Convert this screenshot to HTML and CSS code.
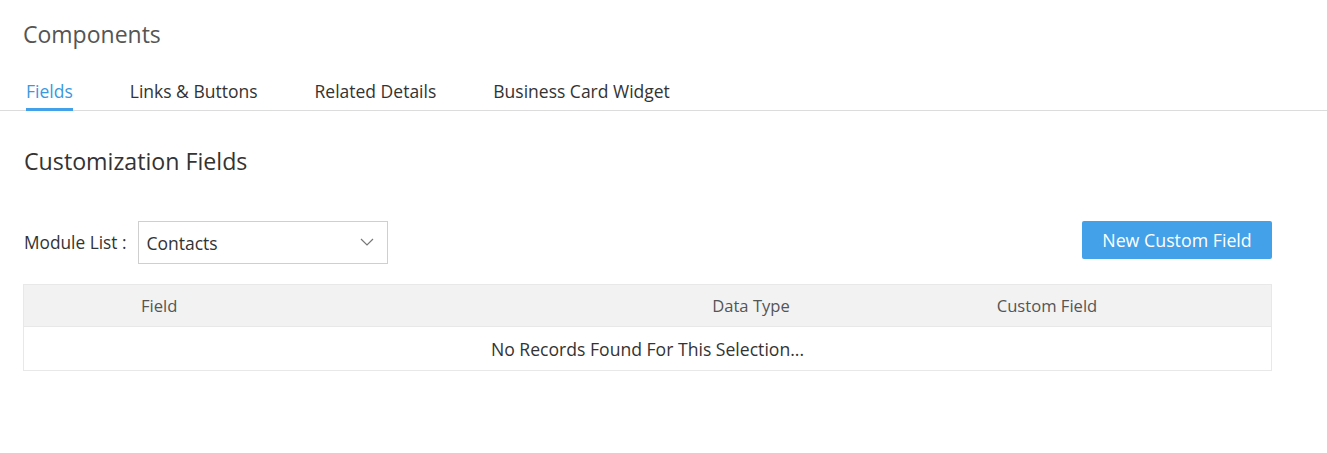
FILE: index.html
```html
<!DOCTYPE html>
<html>
<head>
<meta charset="utf-8">
<link rel="stylesheet" href="styles.css">
</head>
<body>
<div class="page">
  <h1 class="title">Components</h1>
  <nav class="tabs">
    <a class="tab active">Fields</a>
    <a class="tab">Links &amp; Buttons</a>
    <a class="tab">Related Details</a>
    <a class="tab">Business Card Widget</a>
  </nav>
  <section class="content">
    <h2 class="section-title">Customization Fields</h2>
    <div class="toolbar">
      <div class="module">
        <span class="module-label">Module List :</span>
        <div class="select">
          <span>Contacts</span>
          <svg class="chev" width="14" height="8" viewBox="0 0 14 8"><path d="M1 1 L7 7 L13 1" fill="none" stroke="#777" stroke-width="1.2"/></svg>
        </div>
      </div>
      <button class="btn">New Custom Field</button>
    </div>
    <div class="table">
      <div class="thead">
        <div class="th th-field">Field</div>
        <div class="th th-center">Data Type</div>
        <div class="th th-center">Custom Field</div>
        <div class="th"></div>
      </div>
      <div class="empty">No Records Found For This Selection...</div>
    </div>
  </section>
</div>
</body>
</html>
```
FILE: styles.css
```css
* { box-sizing: border-box; }
body {
  margin: 0;
  background: #fff;
  font-family: "Open Sans", Lato, sans-serif;
  color: #333;
}
.page { padding-top: 19px; }
.title {
  margin: 0 0 0 23px;
  font-size: 23px;
  font-weight: 400;
  color: #555;
  line-height: 30px;
}
.tabs {
  display: flex;
  margin-top: 28px;
  border-bottom: 1px solid #dcdcdc;
  padding-left: 26px;
}
.tab {
  font-size: 17.5px;
  color: #333;
  padding: 3px 0 6px;
  margin-right: 57px;
  border-bottom: 3px solid transparent;
  margin-bottom: -1px;
  line-height: 22px;
}
.tab.active {
  color: #3a98e0;
  border-bottom-color: #42a1e9;
}
.content { padding: 0 55px 0 23px; }
.section-title {
  margin: 35px 0 0 1px;
  font-size: 23.2px;
  font-weight: 400;
  color: #333;
  line-height: 30px;
}
.toolbar {
  display: flex;
  justify-content: space-between;
  align-items: flex-start;
  margin-top: 45px;
}
.module { display: flex; align-items: center; }
.module-label {
  font-size: 17.3px;
  margin-left: 1px;
  margin-right: 12px;
}
.select {
  width: 250px;
  height: 43px;
  border: 1px solid #cfcfcf;
  display: flex;
  align-items: center;
  justify-content: space-between;
  padding: 0 13px 0 7px;
  font-size: 17.5px;
  color: #333;
}
.chev { margin-top: -2px; }
.btn {
  background: #42a1e9;
  color: #fff;
  border: none;
  border-radius: 2px;
  font-family: inherit;
  font-size: 17.8px;
  width: 190px;
  height: 38px;
  padding: 0;
}
.table {
  margin-top: 20px;
  border: 1px solid #e8e8e8;
}
.thead {
  display: grid;
  grid-template-columns: 627px 200px 392px 1fr;
  background: #f2f2f2;
  height: 42px;
  align-items: center;
  border-bottom: 1px solid #e8e8e8;
  font-size: 16.6px;
  color: #555;
}
.th-field { padding-left: 117px; }
.th-center { text-align: center; }
.empty {
  height: 43px;
  display: flex;
  align-items: center;
  justify-content: center;
  font-size: 17.6px;
  color: #333;
}
```
